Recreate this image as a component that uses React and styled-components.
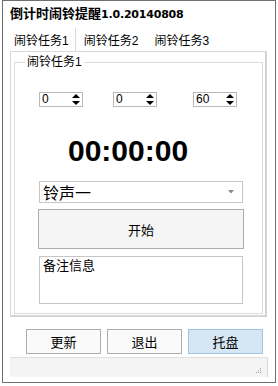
import styled, { createGlobalStyle } from 'styled-components'

const GlobalStyle = createGlobalStyle`
  html, body {
    margin: 0;
    padding: 0;
    background: #fff;
  }
  body {
    font-family: "Liberation Sans", "Noto Sans CJK SC", sans-serif;
    color: #000;
  }
`

function SpinArrows() {
  return (
    <svg width="8" height="11" viewBox="0 0 8 11">
      <polygon points="4,0 8,4 0,4" fill="#000" />
      <polygon points="0,7 8,7 4,11" fill="#000" />
    </svg>
  )
}

function Spin({ value, ml }) {
  return (
    <SpinBox $ml={ml}>
      <SpinValue>{value}</SpinValue>
      <SpinArrows />
    </SpinBox>
  )
}

export default function App() {
  return (
    <>
      <GlobalStyle />
      <Window>
        <Title>
          倒计时闹铃提醒<Version>1.0.20140808</Version>
        </Title>

        <Tabs>
          <Tab $active>闹铃任务1</Tab>
          <Tab>闹铃任务2</Tab>
          <Tab>闹铃任务3</Tab>
        </Tabs>

        <Panel>
          <GroupBox>
            <Legend>闹铃任务1</Legend>

            <SpinRow>
              <Spin value="0" ml={0} />
              <Spin value="0" ml={30} />
              <Spin value="60" ml={36} />
            </SpinRow>

            <Clock>00:00:00</Clock>

            <Combo>
              <span>铃声一</span>
              <svg width="6" height="4" viewBox="0 0 6 4">
                <polygon points="0,0 6,0 3,3.5" fill="#8a8a8a" />
              </svg>
            </Combo>

            <StartButton>开始</StartButton>

            <Notes>备注信息</Notes>
          </GroupBox>
        </Panel>

        <ButtonRow>
          <Button>更新</Button>
          <Button>退出</Button>
          <Button $primary>托盘</Button>
        </ButtonRow>

        <StatusBar>
          <svg width="6" height="6" viewBox="0 0 6 6">
            <rect x="4" y="0" width="1" height="1" fill="#a0a0a0" />
            <rect x="2" y="2" width="1" height="1" fill="#a0a0a0" />
            <rect x="4" y="2" width="1" height="1" fill="#a0a0a0" />
            <rect x="0" y="4" width="1" height="1" fill="#a0a0a0" />
            <rect x="2" y="4" width="1" height="1" fill="#a0a0a0" />
            <rect x="4" y="4" width="1" height="1" fill="#a0a0a0" />
          </svg>
        </StatusBar>
      </Window>
    </>
  )
}

const Window = styled.div`
  box-sizing: border-box;
  margin-left: 2px;
  width: 274px;
  height: 383px;
  border: 1px solid #6f6f6f;
  background: #fff;
  display: flex;
  flex-direction: column;
`

const Title = styled.div`
  height: 26px;
  line-height: 26px;
  padding-left: 7px;
  font-size: 13px;
  font-weight: bold;
  white-space: nowrap;
`

const Version = styled.span`
  font-size: 11px;
  font-family: "DejaVu Sans", "Liberation Sans", sans-serif;
  letter-spacing: -0.2px;
`

const Tabs = styled.div`
  display: flex;
  height: 24px;
  margin-left: 7px;
  font-size: 12px;
`

const Tab = styled.div`
  display: flex;
  align-items: center;
  padding: 0 8px;
  white-space: nowrap;

  &:first-child {
    padding-left: 4px;
    padding-right: 6px;
  }

  ${(p) => p.$active && `
    border-right: 1px solid #d9d9d9;
    margin: 1px 0 0;
  `}
`

const Panel = styled.div`
  box-sizing: border-box;
  margin-left: 7px;
  width: 257px;
  height: 266px;
  padding: 10px 2px 2px 3px;
  border: 1px solid #d9d9d9;
  border-right: 2px solid #d4d4d4;
  border-bottom: 2px solid #d4d4d4;
`

const GroupBox = styled.div`
  position: relative;
  box-sizing: border-box;
  height: 252px;
  border: 1px solid #dcdcdc;
  padding: 29px 21px 0 24px;
  display: flex;
  flex-direction: column;
`

const Legend = styled.span`
  position: absolute;
  top: -8px;
  left: 10px;
  padding: 0 2px;
  background: #fff;
  font-size: 12px;
  line-height: 14px;
`

const SpinRow = styled.div`
  display: flex;
`

const SpinBox = styled.div`
  box-sizing: border-box;
  width: 44px;
  height: 15px;
  margin-left: ${(p) => p.$ml}px;
  border: 1px solid #b9b9b9;
  display: flex;
  align-items: center;
  justify-content: space-between;
  padding: 0 2px 0 2px;
`

const SpinValue = styled.span`
  font-size: 12px;
  line-height: 13px;
`

const Clock = styled.div`
  margin-top: 29px;
  padding-left: 29px;
  height: 30px;
  line-height: 30px;
  font-size: 30px;
  font-weight: bold;
`

const Combo = styled.div`
  box-sizing: border-box;
  margin-top: 15px;
  width: 204px;
  height: 22px;
  border: 1px solid #c6c6c6;
  display: flex;
  align-items: center;
  justify-content: space-between;
  padding: 0 8px 0 3px;
  font-size: 16px;
`

const StartButton = styled.div`
  box-sizing: border-box;
  margin: 6px 0 0 -1px;
  width: 206px;
  height: 40px;
  border: 1px solid #adadad;
  background: #f5f5f5;
  display: flex;
  align-items: center;
  justify-content: center;
  font-size: 13px;
`

const Notes = styled.div`
  box-sizing: border-box;
  margin-top: 7px;
  width: 204px;
  height: 48px;
  border: 1px solid #c6c6c6;
  padding: 1px 3px;
  font-size: 13px;
  line-height: 16px;
`

const ButtonRow = styled.div`
  display: flex;
  gap: 6px;
  margin: 12px 0 0 23px;
`

const Button = styled.div`
  box-sizing: border-box;
  width: 75px;
  height: 25px;
  border: 1px solid ${(p) => (p.$primary ? '#a4c3df' : '#adadad')};
  background: ${(p) => (p.$primary ? '#d5e6f5' : '#fafafa')};
  display: flex;
  align-items: center;
  justify-content: center;
  font-size: 13px;
`

const StatusBar = styled.div`
  box-sizing: border-box;
  margin: 3px 0 0 7px;
  width: 258px;
  height: 20px;
  background: #f4f4f4;
  border-top: 1px solid #dedede;
  border-right: 1px solid #d6d6d6;
  display: flex;
  align-items: flex-end;
  justify-content: flex-end;
  padding: 0 5px 3px 0;
`
